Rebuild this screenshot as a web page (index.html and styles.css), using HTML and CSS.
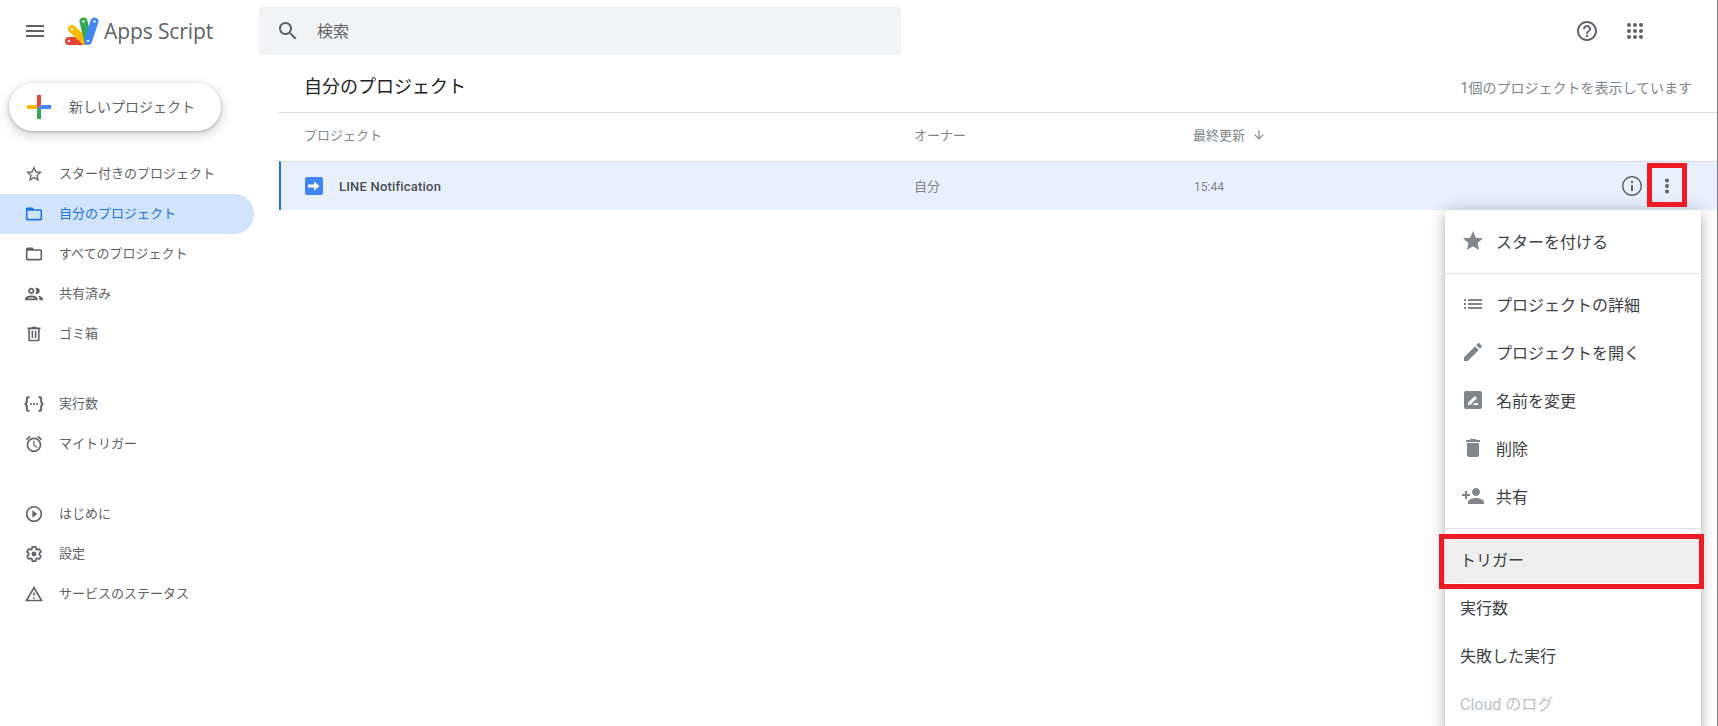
FILE: index.html
```html
<!DOCTYPE html>
<html lang="ja">
<head>
<meta charset="utf-8">
<title>Apps Script</title>
<link rel="stylesheet" href="styles.css">
</head>
<body>
<div class="app">
  <header class="topbar">
    <div class="brand">
      <svg class="icon menu-btn" viewBox="0 0 24 24"><path d="M3 18h18v-2H3v2zm0-5h18v-2H3v2zm0-7v2h18V6H3z"/></svg>
      <svg class="logo" viewBox="0 0 36 30">
        <g fill="none" stroke-width="8" stroke-linecap="round">
          <path d="M5 25H21" stroke="#ea4335"/>
          <path d="M8 13L21 25" stroke="#fbbc04"/>
          <path d="M19.500 5.500L24 24" stroke="#34a853"/>
          <path d="M30.500 5.500L24 25" stroke="#4285f4"/>
        </g>
        <g fill="#fff" opacity=".85">
          <circle cx="5" cy="25" r="1.300"/><circle cx="8" cy="13" r="1.300"/><circle cx="19.500" cy="5.500" r="1.300"/><circle cx="30.500" cy="5.500" r="1.300"/><circle cx="24" cy="25" r="1.300"/>
        </g>
      </svg>
      <span class="brand-name">Apps Script</span>
    </div>
    <div class="search">
      <svg class="icon" viewBox="0 0 24 24"><path d="M15.500 14h-.79l-.28-.27C15.410 12.590 16 11.110 16 9.500 16 5.910 13.090 3 9.500 3S3 5.910 3 9.500 5.910 16 9.500 16c1.610 0 3.090-.59 4.230-1.570l.27.28v.79l5 4.990L20.490 19l-4.990-5zm-6 0C7.010 14 5 11.990 5 9.500S7.010 5 9.500 5 14 7.010 14 9.500 11.990 14 9.500 14z"/></svg>
      <span class="search-label">検索</span>
    </div>
    <div class="top-actions">
      <svg class="icon" viewBox="0 0 24 24"><path d="M11 18h2v-2h-2v2zm1-16C6.480 2 2 6.480 2 12s4.480 10 10 10 10-4.480 10-10S17.520 2 12 2zm0 18c-4.410 0-8-3.590-8-8s3.590-8 8-8 8 3.590 8 8-3.590 8-8 8zm0-14c-2.210 0-4 1.790-4 4h2c0-1.100.9-2 2-2s2 .9 2 2c0 2-3 1.750-3 5h2c0-2.250 3-2.500 3-5 0-2.210-1.790-4-4-4z"/></svg>
      <svg class="icon" viewBox="0 0 24 24"><g><circle cx="6" cy="6" r="2"/><circle cx="12" cy="6" r="2"/><circle cx="18" cy="6" r="2"/><circle cx="6" cy="12" r="2"/><circle cx="12" cy="12" r="2"/><circle cx="18" cy="12" r="2"/><circle cx="6" cy="18" r="2"/><circle cx="12" cy="18" r="2"/><circle cx="18" cy="18" r="2"/></g></svg>
    </div>
  </header>

  <div class="body">
    <aside class="sidebar">
      <button class="new-btn">
        <svg class="plus" viewBox="0 0 24 24">
          <path d="M10 0h4v10h-4z" fill="#ea4335"/>
          <path d="M0 10h10v4H0z" fill="#fbbc04"/>
          <path d="M10 14h4v10h-4z" fill="#34a853"/>
          <path d="M14 10h10v4H14z" fill="#4285f4"/>
          <path d="M10 10h4l-4 4z" fill="#ea4335"/>
          <path d="M14 10v4h-4z" fill="#4285f4"/>
        </svg>
        <span class="new-label">新しいプロジェクト</span>
      </button>
      <nav class="nav-group first">
        <a class="nav-item"><svg class="icon nav-icon" viewBox="0 0 24 24"><path d="M22 9.240l-7.190-.62L12 2 9.190 8.630 2 9.240l5.460 4.730L5.820 21 12 17.270 18.180 21l-1.630-7.030L22 9.240zM12 15.400l-3.760 2.270 1-4.280-3.320-2.880 4.380-.38L12 6.100l1.710 4.040 4.380.38-3.320 2.880 1 4.280L12 15.400z"/></svg><span>スター付きのプロジェクト</span></a>
        <a class="nav-item active"><svg class="icon nav-icon" viewBox="0 0 24 24"><path d="M20 6h-8l-2-2H4c-1.100 0-1.990.9-1.990 2L2 18c0 1.100.9 2 2 2h16c1.100 0 2-.9 2-2V8c0-1.100-.9-2-2-2zm0 12H4V8h16v10z"/></svg><span>自分のプロジェクト</span></a>
        <a class="nav-item"><svg class="icon nav-icon" viewBox="0 0 24 24"><path d="M20 6h-8l-2-2H4c-1.100 0-1.990.9-1.990 2L2 18c0 1.100.9 2 2 2h16c1.100 0 2-.9 2-2V8c0-1.100-.9-2-2-2zm0 12H4V8h16v10z"/></svg><span>すべてのプロジェクト</span></a>
        <a class="nav-item"><svg class="icon nav-icon nav-icon-wide" viewBox="0 0 24 24"><path d="M9 13.750c-2.340 0-7 1.170-7 3.500V19h14v-1.750c0-2.330-4.660-3.500-7-3.500zM4.340 17c.84-.58 2.870-1.250 4.660-1.250s3.820.67 4.660 1.250H4.340zM9 12c1.930 0 3.500-1.570 3.500-3.500S10.930 5 9 5 5.500 6.570 5.500 8.500 7.070 12 9 12zm0-5c.83 0 1.500.67 1.500 1.500S9.830 10 9 10s-1.500-.67-1.500-1.500S8.170 7 9 7zm7.040 6.810c1.160.84 1.960 1.960 1.960 3.440V19h4v-1.750c0-2.020-3.500-3.170-5.960-3.440zM15 12c1.930 0 3.500-1.570 3.500-3.500S16.930 5 15 5c-.54 0-1.040.13-1.500.35.630.89 1 1.980 1 3.150s-.37 2.260-1 3.150c.46.22.96.35 1.500.35z"/></svg><span>共有済み</span></a>
        <a class="nav-item"><svg class="icon nav-icon" viewBox="0 0 24 24"><path d="M15 4V3H9v1H4v2h1v13c0 1.100.9 2 2 2h10c1.100 0 2-.9 2-2V6h1V4h-5zm2 15H7V6h10v13zM9 8h2v9H9zm4 0h2v9h-2z"/></svg><span>ゴミ箱</span></a>
      </nav>
      <nav class="nav-group">
        <a class="nav-item"><svg class="icon nav-icon nav-icon-wide" viewBox="0 0 24 24"><path d="M7 4.500H5.500C4.400 4.500 4 5.200 4 6V10l-1.500 2L4 14v4C4 18.800 4.400 19.500 5.500 19.500H7M17 4.500h1.500c1.100 0 1.500.7 1.500 1.500V10l1.500 2-1.500 2v4c0 .8-.4 1.500-1.500 1.500H17" fill="none" stroke="#5f6368" stroke-width="2.200"/><circle cx="8.500" cy="12" r="1.200"/><circle cx="12" cy="12" r="1.200"/><circle cx="15.500" cy="12" r="1.200"/></svg><span>実行数</span></a>
        <a class="nav-item"><svg class="icon nav-icon" viewBox="0 0 24 24"><path d="M22 5.720l-4.600-3.860-1.290 1.530 4.600 3.860L22 5.720zM7.880 3.390L6.600 1.860 2 5.710l1.290 1.530 4.590-3.850zM12.500 8H11v6l4.750 2.850.75-1.230-4-2.370V8zM12 4c-4.970 0-9 4.030-9 9s4.020 9 9 9c4.970 0 9-4.030 9-9s-4.030-9-9-9zm0 16c-3.870 0-7-3.130-7-7s3.130-7 7-7 7 3.130 7 7-3.130 7-7 7z"/></svg><span>マイトリガー</span></a>
      </nav>
      <nav class="nav-group">
        <a class="nav-item"><svg class="icon nav-icon" viewBox="0 0 24 24"><path d="M10 16.500l6-4.500-6-4.500v9zM12 2C6.480 2 2 6.480 2 12s4.480 10 10 10 10-4.480 10-10S17.520 2 12 2zm0 18c-4.410 0-8-3.590-8-8s3.590-8 8-8 8 3.590 8 8-3.590 8-8 8z"/></svg><span>はじめに</span></a>
        <a class="nav-item"><svg class="icon nav-icon" viewBox="0 0 24 24"><path transform="translate(1.440 1.440) scale(.88)" fill="none" stroke="#5f6368" stroke-width="2.400" d="M19.430 12.980c.04-.32.07-.64.07-.98s-.03-.66-.07-.98l2.110-1.650c.19-.15.24-.42.12-.64l-2-3.460c-.12-.22-.39-.3-.61-.22l-2.490 1c-.52-.4-1.080-.73-1.690-.98l-.38-2.650C14.460 2.180 14.250 2 14 2h-4c-.25 0-.46.18-.49.42l-.38 2.650c-.61.25-1.170.59-1.690.98l-2.490-1c-.23-.09-.49 0-.61.22l-2 3.460c-.13.22-.07.49.12.64l2.110 1.650c-.04.32-.07.65-.07.98s.03.66.07.98l-2.110 1.650c-.19.15-.24.42-.12.64l2 3.460c.12.22.39.3.61.22l2.490-1c.52.4 1.080.73 1.690.98l.38 2.650c.03.24.24.42.49.42h4c.25 0 .46-.18.49-.42l.38-2.650c.61-.25 1.170-.59 1.690-.98l2.490 1c.23.09.49 0 .61-.22l2-3.460c.12-.22.07-.49-.12-.64l-2.110-1.650z"/><circle cx="12" cy="12" r="3"/></svg><span>設定</span></a>
        <a class="nav-item"><svg class="icon nav-icon" viewBox="0 0 24 24"><path d="M12 5.990L19.530 19H4.470L12 5.990M12 2L1 21h22L12 2zm1 14h-2v2h2v-2zm0-6h-2v4h2v-4z"/></svg><span>サービスのステータス</span></a>
      </nav>
    </aside>

    <main class="main">
      <div class="page-head">
        <h1>自分のプロジェクト</h1>
        <span class="count">1個のプロジェクトを表示しています</span>
      </div>
      <div class="table-head table-grid">
        <span>プロジェクト</span>
        <span>オーナー</span>
        <span class="sort">最終更新<svg viewBox="0 0 24 24"><path d="M20 12l-1.410-1.410L13 16.170V4h-2v12.170l-5.580-5.590L4 12l8 8 8-8z"/></svg></span>
      </div>
      <div class="table-row table-grid">
        <span class="project-name">
          <svg class="file-icon" viewBox="0 0 18 18"><rect width="18" height="18" rx="2" fill="#4285f4"/><path d="M3 7.500h6V4.500L14.500 9 9 13.500v-3H3z" fill="#fff"/></svg>
          LINE Notification
        </span>
        <span class="owner">自分</span>
        <span class="row-end">
          <span class="time">15:44</span>
          <span class="row-actions">
            <svg class="icon" viewBox="0 0 24 24"><path d="M11 17h2v-6h-2v6zm1-15C6.480 2 2 6.480 2 12s4.480 10 10 10 10-4.480 10-10S17.520 2 12 2zm0 18.500c-4.690 0-8.500-3.810-8.500-8.500S7.310 3.500 12 3.500s8.500 3.810 8.500 8.500-3.810 8.500-8.500 8.500zM11 9h2V7h-2v2z"/></svg>
            <svg class="icon" viewBox="0 0 24 24"><circle cx="12" cy="6.500" r="2"/><circle cx="12" cy="12" r="2"/><circle cx="12" cy="17.500" r="2"/></svg>
          </span>
        </span>
      </div>
    </main>
  </div>

  <div class="menu">
    <div class="menu-item"><svg class="icon" viewBox="0 0 24 24"><path d="M12 17.270L18.180 21l-1.640-7.030L22 9.240l-7.190-.61L12 2 9.190 8.630 2 9.240l5.460 4.730L5.820 21z"/></svg><span>スターを付ける</span></div>
    <hr class="menu-sep">
    <div class="menu-item"><svg class="icon" viewBox="0 0 24 24"><path d="M3 13h2v-2H3v2zm0 4h2v-2H3v2zm0-8h2V7H3v2zm4 4h14v-2H7v2zm0 4h14v-2H7v2zM7 7v2h14V7H7z"/></svg><span>プロジェクトの詳細</span></div>
    <div class="menu-item"><svg class="icon" viewBox="0 0 24 24"><path d="M3 17.250V21h3.750L17.810 9.940l-3.750-3.750L3 17.250zM20.710 7.040c.39-.39.39-1.020 0-1.410l-2.340-2.340c-.39-.39-1.020-.39-1.410 0l-1.830 1.830 3.750 3.750 1.830-1.830z"/></svg><span>プロジェクトを開く</span></div>
    <div class="menu-item"><svg class="icon" viewBox="0 0 24 24"><path fill-rule="evenodd" d="M5 3h14c1.100 0 2 .9 2 2v14c0 1.100-.9 2-2 2H5c-1.100 0-2-.9-2-2V5c0-1.100.9-2 2-2zm2 14h2.200l6.800-6.800-2.200-2.200L7 14.800V17zm4.500 0H17v-2h-3.500l-2 2z"/></svg><span>名前を変更</span></div>
    <div class="menu-item"><svg class="icon" viewBox="0 0 24 24"><path d="M6 19c0 1.100.9 2 2 2h8c1.100 0 2-.9 2-2V7H6v12zM19 4h-3.500l-1-1h-5l-1 1H5v2h14V4z"/></svg><span>削除</span></div>
    <div class="menu-item"><svg class="icon" viewBox="0 0 24 24"><path d="M15 12c2.210 0 4-1.790 4-4s-1.790-4-4-4-4 1.790-4 4 1.790 4 4 4zm-9-2V7H4v3H1v2h3v3h2v-3h3v-2H6zm9 4c-2.670 0-8 1.340-8 4v2h16v-2c0-2.660-5.330-4-8-4z"/></svg><span>共有</span></div>
    <hr class="menu-sep">
    <div class="menu-item hovered"><span>トリガー</span></div>
    <div class="menu-item"><span>実行数</span></div>
    <div class="menu-item"><span>失敗した実行</span></div>
    <div class="menu-item disabled"><span>Cloud のログ</span></div>
  </div>

  <div class="callout callout-kebab"></div>
  <div class="callout callout-trigger"></div>
</div>
</body>
</html>
```

FILE: styles.css
```css
* { box-sizing: border-box; }

html, body {
  margin: 0;
  height: 100%;
  overflow: hidden;
  background: #fff;
}

body {
  font-family: Roboto, "Noto Sans CJK JP", sans-serif;
  color: #3c4043;
}

.app {
  position: relative;
  height: 726px;
  overflow: hidden;
  border-right: 1px solid #7f7f7f;
}

.icon {
  width: 24px;
  height: 24px;
  flex: none;
  fill: #5f6368;
}

/* top bar */
.topbar {
  height: 62px;
  display: flex;
  align-items: center;
}

.brand {
  width: 259px;
  flex: none;
  display: flex;
  align-items: center;
  padding-left: 23px;
}

.logo {
  width: 36px;
  height: 30px;
  margin-left: 17px;
  flex: none;
}

.brand-name {
  margin-left: 4px;
  font-family: "Open Sans", Roboto, sans-serif;
  font-size: 21px;
  letter-spacing: -.1px;
  color: #5f6368;
  white-space: nowrap;
}

.search {
  width: 642px;
  height: 48px;
  background: #f1f3f4;
  border-radius: 4px;
  display: flex;
  align-items: center;
  gap: 17px;
  padding-left: 17px;
  font-size: 16px;
  color: #5f6368;
}

.search-label {
  margin-top: -2px;
}

.top-actions {
  margin-left: auto;
  display: flex;
  gap: 24px;
  padding-right: 70px;
}

/* sidebar */
.body {
  display: flex;
}

.sidebar {
  width: 279px;
  flex: none;
}

.new-btn {
  width: 212px;
  height: 48px;
  margin: 21px 0 0 9px;
  padding: 0 0 0 18px;
  display: flex;
  align-items: center;
  gap: 18px;
  border: 0;
  border-radius: 24px;
  background: #fff;
  box-shadow: 0 1px 3px rgba(60, 64, 67, .35), 0 4px 8px 3px rgba(60, 64, 67, .15);
  font: inherit;
  font-size: 14px;
  color: #5f6368;
}

.new-label {
  margin-top: -2px;
}

.plus {
  width: 24px;
  height: 24px;
  flex: none;
}

.nav-group {
  margin-top: 30px;
}

.nav-group.first {
  margin-top: 23px;
}

.nav-item {
  width: 254px;
  height: 40px;
  display: flex;
  align-items: center;
  gap: 16px;
  padding-left: 25px;
  border-radius: 0 20px 20px 0;
  font-size: 13px;
  line-height: 1;
  color: #5f6368;
  white-space: nowrap;
}

.nav-item span {
  margin-top: -2px;
}

.nav-icon {
  width: 18px;
  height: 18px;
  transform: scale(1.080);
}

.nav-icon-wide {
  transform: scale(1.200);
}

.nav-item.active {
  background: #d2e3fc;
  color: #1a73e8;
}

.nav-item.active .icon {
  fill: #1a73e8;
}

/* main */
.main {
  flex: 1;
  min-width: 0;
}

.page-head {
  height: 51px;
  display: flex;
  align-items: center;
  justify-content: space-between;
  padding: 0 25px;
  border-bottom: 1px solid #dadce0;
}

.page-head h1 {
  margin: -4px 0 0;
  font-size: 18px;
  font-weight: 400;
  color: #202124;
}

.count {
  font-size: 14px;
  color: #80868b;
}

.table-grid {
  display: grid;
  grid-template-columns: 610px 279px 1fr;
  align-items: center;
  padding-left: 25px;
  font-size: 13px;
  color: #80868b;
}

.table-head {
  height: 48px;
  padding-bottom: 5px;
}

.sort {
  display: flex;
  align-items: center;
  gap: 7px;
}

.sort svg {
  width: 14px;
  height: 14px;
  fill: #80868b;
}

.table-row {
  height: 49px;
  padding-left: 24px;
  background: #e8f0fe;
  border-left: 2px solid #1a73e8;
  border-top: 1px solid #dadce0;
  grid-template-columns: 609px 279px 1fr;
}

.project-name {
  display: flex;
  align-items: center;
  gap: 16px;
  font-weight: 500;
  letter-spacing: .2px;
  color: #4a4e52;
}

.file-icon {
  width: 18px;
  height: 18px;
  flex: none;
}

.owner {
  margin-top: -2px;
}

.row-end {
  display: flex;
  align-items: center;
  justify-content: space-between;
  padding-right: 38px;
}

.time {
  margin: 2px 0 0 1px;
  font-size: 12px;
}

.row-actions {
  display: flex;
  gap: 11px;
}

/* overlay menu */
.menu {
  position: absolute;
  top: 210px;
  right: 16px;
  width: 256px;
  padding: 7px 0 8px;
  background: #fff;
  border-radius: 4px;
  box-shadow: 0 0 16px rgba(0, 0, 0, .22), 0 8px 10px 1px rgba(0, 0, 0, .1), 0 5px 5px -3px rgba(0, 0, 0, .2);
}

.menu-item {
  height: 48px;
  display: flex;
  align-items: center;
  gap: 11px;
  padding-left: 15px;
  font-size: 16px;
  color: #3c4043;
  white-space: nowrap;
}

.menu-item .icon {
  margin-left: 1px;
  fill: #80868b;
}

.menu-item.hovered {
  background: #eee;
}

.menu-item.disabled {
  color: #bdc1c6;
}

.menu-sep {
  height: 1px;
  margin: 8px 0 6px;
  border: 0;
  background: #e0e0e0;
}

/* red annotation boxes */
.callout {
  position: absolute;
  border: 5px solid #ed1c24;
}

.callout-kebab {
  left: 1647px;
  top: 163px;
  width: 40px;
  height: 44px;
}

.callout-trigger {
  left: 1439px;
  top: 534px;
  width: 265px;
  height: 55px;
}
```
